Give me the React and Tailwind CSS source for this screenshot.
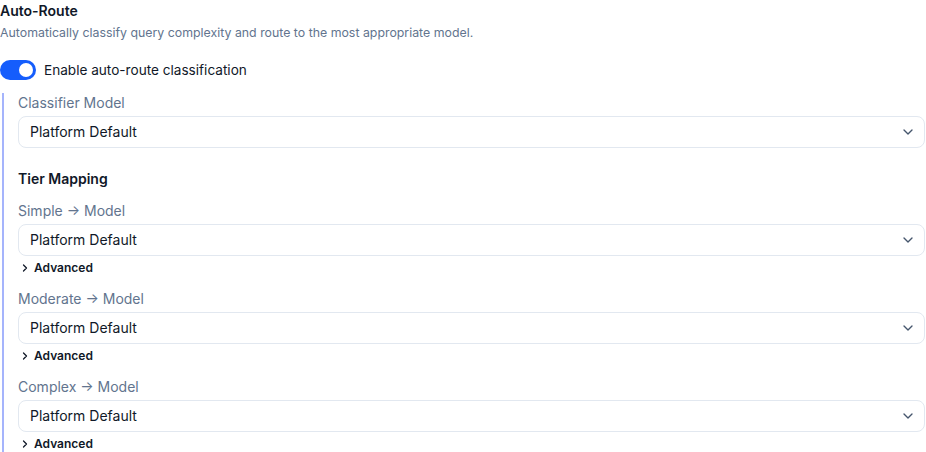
import { ChevronDown, ChevronRight } from "lucide-react";

function ModelSelect() {
  return (
    <div className="flex h-8 w-full items-center justify-between rounded-lg border border-slate-200 bg-white pl-[11px] pr-2 text-sm text-gray-900">
      <span>Platform Default</span>
      <ChevronDown size={16} strokeWidth={2} className="text-slate-600" />
    </div>
  );
}

function Tier({ label }) {
  return (
    <div className="mt-[13px] first:mt-3">
      <div className="mb-[3px] text-sm leading-5 text-slate-500">{label}</div>
      <ModelSelect />
      <button className="mt-1 flex h-4 items-center gap-[3px] pl-[1px] text-xs font-semibold text-gray-900">
        <ChevronRight size={12} strokeWidth={2.5} />
        Advanced
      </button>
    </div>
  );
}

export default function App() {
  return (
    <div
      className="h-[452px] w-[926px] overflow-hidden bg-white pr-px"
      style={{ fontFamily: "Inter, 'Noto Sans', sans-serif" }}
    >
      <h3 className="pt-px text-sm font-semibold leading-5 text-gray-900">Auto-Route</h3>
      <p className="mt-1 text-[12.35px] leading-4 text-slate-500">
        Automatically classify query complexity and route to the most appropriate model.
      </p>

      <label className="mt-[19px] flex items-center gap-2 text-[13.6px] leading-5 text-gray-900">
        <span className="relative inline-flex h-5 w-9 items-center rounded-full bg-blue-600">
          <span className="absolute right-[3px] h-[14px] w-[14px] rounded-full bg-white" />
        </span>
        Enable auto-route classification
      </label>

      <div className="ml-[2px] mt-[13px] border-l-2 border-[#a5b4fc] pl-[14px]">
        <div className="mb-[3px] text-sm leading-5 text-slate-500">Classifier Model</div>
        <ModelSelect />

        <div className="mt-[21px] text-sm font-semibold leading-5 text-gray-900">Tier Mapping</div>

        <div>
          <Tier label="Simple → Model" />
          <Tier label="Moderate → Model" />
          <Tier label="Complex → Model" />
        </div>
      </div>
    </div>
  );
}
